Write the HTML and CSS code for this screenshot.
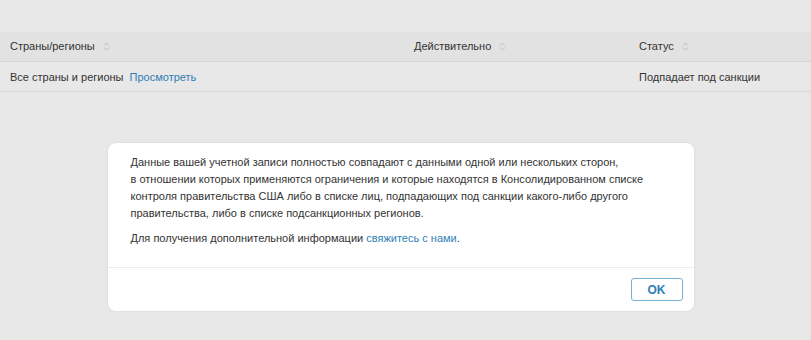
FILE: index.html
```html
<!DOCTYPE html>
<html>
<head>
<meta charset="utf-8">
<title>Санкции</title>
<link rel="stylesheet" href="styles.css">
</head>
<body>
	<div class="page">
		<div class="table">
			<div class="row head">
				<div class="cell c1">Страны/регионы <span class="sort"><svg width="7" height="9" viewBox="0 0 7 9"><path d="M1 3.5 L3.5 1 L6 3.5 M1 5.5 L3.5 8 L6 5.5" fill="none" stroke="#bdbdbd" stroke-width="1"/></svg></span></div>
				<div class="cell c2">Действительно <span class="sort"><svg width="7" height="9" viewBox="0 0 7 9"><path d="M1 3.5 L3.5 1 L6 3.5 M1 5.5 L3.5 8 L6 5.5" fill="none" stroke="#bdbdbd" stroke-width="1"/></svg></span></div>
				<div class="cell c3">Статус <span class="sort"><svg width="7" height="9" viewBox="0 0 7 9"><path d="M1 3.5 L3.5 1 L6 3.5 M1 5.5 L3.5 8 L6 5.5" fill="none" stroke="#bdbdbd" stroke-width="1"/></svg></span></div>
			</div>
			<div class="row">
				<div class="cell c1">Все страны и регионы <a class="link" href="#">Просмотреть</a></div>
				<div class="cell c2"></div>
				<div class="cell c3">Подпадает под санкции</div>
			</div>
		</div>

		<div class="overlay">
			<div class="modal">
				<div class="modal-body">
					<p>Данные вашей учетной записи полностью совпадают с данными одной или нескольких сторон,<br>
					в отношении которых применяются ограничения и которые находятся в Консолидированном списке<br>
					контроля правительства США либо в списке лиц, подпадающих под санкции какого-либо другого<br>
					правительства, либо в списке подсанкционных регионов.</p>
					<p>Для получения дополнительной информации <a class="link" href="#">свяжитесь с нами</a>.</p>
				</div>
				<div class="modal-foot">
					<button class="ok" type="button">OK</button>
				</div>
			</div>
		</div>
	</div>
</body>
</html>
```

FILE: styles.css
```css
* {
	box-sizing: border-box;
}

body {
	margin: 0;
	background: #e8e8e8;
	font-family: 'Liberation Sans', 'Helvetica', sans-serif;
	font-size: 11px;
	color: #333;
}

.page {
	width: 811px;
	height: 340px;
	padding-top: 32px;
}

.row {
	display: grid;
	grid-template-columns: 404px 225px auto;
	height: 30px;
	align-items: center;
	border-bottom: 1px solid #d7d7d7;
}

.row.head {
	background: #e2e2e2;
}

.cell {
	padding-left: 10px;
	white-space: nowrap;
}

.sort {
	display: inline-block;
	margin-left: 5px;
	vertical-align: -1px;
}

.link {
	color: #2f80b5;
	text-decoration: none;
	margin-left: 3px;
}

.modal-body .link {
	margin-left: 0;
}

.overlay {
	display: flex;
	justify-content: center;
	padding: 51px 0 0 0;
}

.modal {
	width: 586px;
	margin-left: -10px;
	background: #fff;
	border-radius: 8px;
	box-shadow: 0 0 3px rgba(0, 0, 0, 0.08);
}

.modal-body {
	padding: 11px 20px 20px 23px;
	border-bottom: 1px solid #ececec;
	line-height: 17px;
	white-space: nowrap;
}

.modal-body p {
	margin: 0 0 8px 0;
}

.modal-body p:last-child {
	margin-bottom: 0;
}

.modal-foot {
	display: flex;
	justify-content: flex-end;
	padding: 10px 11px 10px 0;
}

.ok {
	width: 52px;
	height: 23px;
	background: #fff;
	border: 1px solid #78aed0;
	border-radius: 3px;
	color: #2f80b5;
	font-family: inherit;
	font-size: 12px;
	font-weight: bold;
}
```
